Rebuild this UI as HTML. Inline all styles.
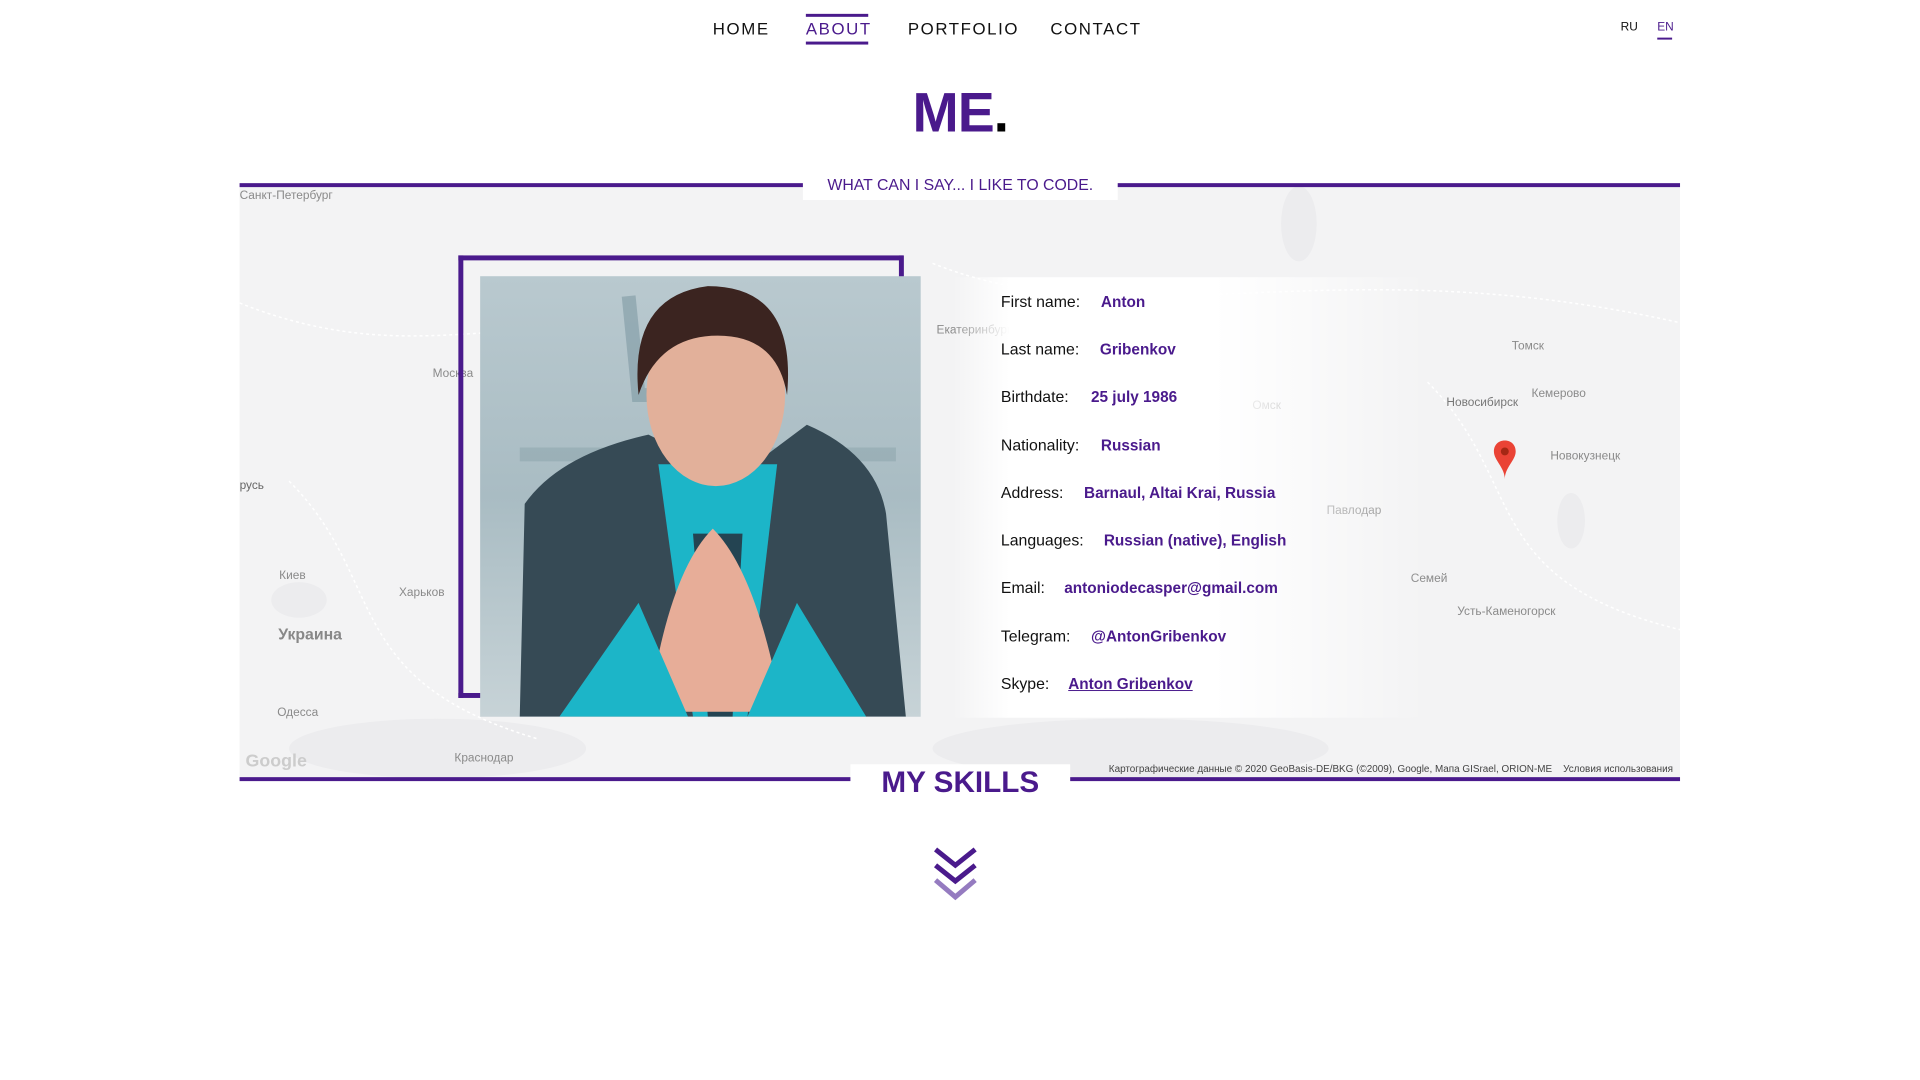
<!DOCTYPE html>
<html><head><meta charset="utf-8"><style>
*{margin:0;padding:0;box-sizing:border-box}
body{width:1920px;height:1080px;background:#fff;position:relative;overflow:hidden;font-family:"Liberation Sans","DejaVu Sans",sans-serif;color:#111}
#w{position:absolute;left:0;top:0;width:1940px;height:1090px;transform:scale(0.99);transform-origin:0 0}
.a{position:absolute;white-space:nowrap}
.nav{font-size:17px;letter-spacing:1.6px;top:20px}
.p{color:#4a1a8c}
.map{position:absolute;left:242px;top:186px;width:1455px;height:601px;background:#f3f3f4;overflow:hidden}
.ml{position:absolute;font-size:12px;color:#8a8a8a;white-space:nowrap}
.lab{position:absolute;left:1011px;font-size:16px;color:#111}
.val{position:absolute;font-size:15.5px;color:#4a1a8c;font-weight:bold}
</style></head><body><div id="w">
<div class="a nav" style="left:720px">HOME</div>
<div class="a nav p" style="left:814px">ABOUT</div>
<div class="a" style="left:814px;top:14px;width:63px;height:3px;background:#4a1a8c"></div>
<div class="a" style="left:814px;top:42px;width:63px;height:3px;background:#4a1a8c"></div>
<div class="a nav" style="left:917px">PORTFOLIO</div>
<div class="a nav" style="left:1061px">CONTACT</div>
<div class="a" style="left:1637px;top:20px;font-size:12px">RU</div>
<div class="a p" style="left:1674px;top:20px;font-size:12px">EN</div>
<div class="a" style="left:1674px;top:38px;width:15px;height:2px;background:#4a1a8c"></div>
<div class="a" style="left:0;width:1940px;text-align:center;top:81px;font-size:56px;font-weight:bold;color:#4a1a8c;letter-spacing:-1px">ME<span style="color:#000">.</span></div>

<div class="map">
 <svg width="1455" height="601" style="position:absolute;left:0;top:0">
  <g fill="#ececee"><ellipse cx="1070" cy="40" rx="18" ry="38"/><ellipse cx="60" cy="420" rx="28" ry="18"/><ellipse cx="1345" cy="340" rx="14" ry="28"/><ellipse cx="900" cy="570" rx="200" ry="30"/><ellipse cx="200" cy="570" rx="150" ry="30"/></g>
  <g stroke="#fff" stroke-width="1.5" fill="none" stroke-dasharray="3 3"><path d="M0 120 C200 200 300 100 500 180"/><path d="M700 80 C900 160 1100 60 1455 140"/><path d="M50 300 C150 400 100 500 300 560"/><path d="M1200 200 C1300 300 1250 400 1455 450"/></g>
 </svg>
 <div class="ml" style="left:0;top:4px">Санкт-Петербург</div>
 <div class="ml" style="left:195px;top:184px">Москва</div>
 <div class="ml" style="left:0;top:297px;color:#666">русь</div>
 <div class="ml" style="left:40px;top:388px">Киев</div>
 <div class="ml" style="left:161px;top:405px">Харьков</div>
 <div class="ml" style="left:39px;top:447px;font-size:16px;color:#888;font-weight:bold">Украина</div>
 <div class="ml" style="left:38px;top:526px">Одесса</div>
 <div class="ml" style="left:217px;top:572px">Краснодар</div>
 <div class="ml" style="left:704px;top:140px">Екатеринбург</div>
 <div class="ml" style="left:1023px;top:216px">Омск</div>
 <div class="ml" style="left:1219px;top:213px;color:#777">Новосибирск</div>
 <div class="ml" style="left:1285px;top:156px">Томск</div>
 <div class="ml" style="left:1305px;top:204px">Кемерово</div>
 <div class="ml" style="left:1324px;top:267px">Новокузнецк</div>
 <div class="ml" style="left:1098px;top:322px">Павлодар</div>
 <div class="ml" style="left:1183px;top:391px">Семей</div>
 <div class="ml" style="left:1230px;top:424px">Усть-Каменогорск</div>
 <div class="ml" style="left:6px;top:572px;font-size:18px;color:#ccc;font-weight:bold">Google</div>
 <div class="ml" style="left:878px;top:586px;font-size:10px;color:#444">Картографические данные © 2020 GeoBasis-DE/BKG (©2009), Google, Мапа GISrael, ORION-ME &nbsp;&nbsp; Условия использования</div>
 <div style="position:absolute;left:720px;top:94px;width:480px;height:445px;background:linear-gradient(90deg,rgba(255,255,255,0),#fff 12%,#fff 55%,rgba(255,255,255,0))"></div>
 <svg width="26" height="42" style="position:absolute;left:1265px;top:258px" viewBox="0 0 26 42"><path d="M13 1C6 1 2 6 2 12c0 9 11 16 11 28c0-12 11-19 11-28C24 6 20 1 13 1z" fill="#ea4335"/><circle cx="13" cy="12" r="4" fill="#a52714"/></svg>
</div>

<div class="a" style="left:242px;top:185px;width:1455px;height:4px;background:#4a1a8c"></div>
<div class="a" style="left:811px;top:178px;width:318px;height:24px;background:#fff"></div>
<div class="a p" style="left:0;width:1940px;text-align:center;top:179px;font-size:16px">WHAT CAN I SAY... I LIKE TO CODE.</div>

<div class="a" style="left:463px;top:258px;width:449px;height:447px;border:5px solid #4a1a8c;border-right:none"></div>
<div class="a" style="left:908px;top:258px;width:5px;height:22px;background:#4a1a8c"></div>
<div class="a" style="left:485px;top:279px;width:445px;height:445px;overflow:hidden;background:linear-gradient(180deg,#b9c9cf,#a9bcc3 50%,#c7d3d7)">
 <svg width="445" height="445" viewBox="0 0 445 445">
  <path d="M150 20 L160 120 L230 120 L240 20" fill="none" stroke="#7f9aa3" stroke-width="14" opacity=".6"/>
  <path d="M40 180 L420 180" stroke="#8ba4ab" stroke-width="14" opacity=".5"/>
  <path d="M40 445 L45 230 Q80 180 170 160 L210 180 L290 180 L330 150 Q400 180 410 240 L430 445Z" fill="#364a55"/>
  <path d="M180 190 L215 445 L270 445 L300 190 Z" fill="#1cb5c8"/>
  <path d="M215 260 L230 445 L255 445 L265 260 Z" fill="#244452"/>
  <ellipse cx="238" cy="120" rx="70" ry="92" fill="#e2b09a"/>
  <path d="M160 120 Q150 20 230 10 Q320 10 310 120 Q300 60 240 60 Q180 60 160 120Z" fill="#3b2420"/>
  <path d="M170 440 Q190 300 235 255 Q280 300 305 440 Z" fill="#e7ad98"/>
  <path d="M80 445 L160 330 L210 445Z M390 445 L320 330 L270 445Z" fill="#1cb5c8"/>
 </svg>
</div>

<div class="lab" style="top:297px">First name:</div><div class="val" style="left:1112px;top:297px">Anton</div>
<div class="lab" style="top:345px">Last name:</div><div class="val" style="left:1111px;top:345px">Gribenkov</div>
<div class="lab" style="top:393px">Birthdate:</div><div class="val" style="left:1102px;top:393px">25 july 1986</div>
<div class="lab" style="top:442px">Nationality:</div><div class="val" style="left:1112px;top:442px">Russian</div>
<div class="lab" style="top:490px">Address:</div><div class="val" style="left:1095px;top:490px">Barnaul, Altai Krai, Russia</div>
<div class="lab" style="top:538px">Languages:</div><div class="val" style="left:1115px;top:538px">Russian (native), English</div>
<div class="lab" style="top:586px">Email:</div><div class="val" style="left:1075px;top:586px">antoniodecasper@gmail.com</div>
<div class="lab" style="top:635px">Telegram:</div><div class="val" style="left:1102px;top:635px">@AntonGribenkov</div>
<div class="lab" style="top:683px">Skype:</div><div class="val" style="left:1079px;top:683px;text-decoration:underline">Anton Gribenkov</div>

<div class="a" style="left:242px;top:785px;width:1455px;height:4px;background:#4a1a8c"></div>
<div class="a" style="left:859px;top:772px;width:222px;height:30px;background:#fff"></div>
<div class="a" style="left:0;width:1940px;text-align:center;top:774px;font-size:30px;font-weight:bold;color:#4a1a8c">MY SKILLS</div>

<svg class="a" style="left:942px;top:854px" width="46" height="60" viewBox="0 0 46 60">
 <path d="M3 4 L23 20 L43 4" fill="none" stroke="#4a1a8c" stroke-width="5"/>
 <path d="M3 20 L23 36 L43 20" fill="none" stroke="#4a1a8c" stroke-width="5"/>
 <path d="M3 35 L23 52 L43 35" fill="none" stroke="#957bc0" stroke-width="5"/>
</svg>
</div></body></html>
